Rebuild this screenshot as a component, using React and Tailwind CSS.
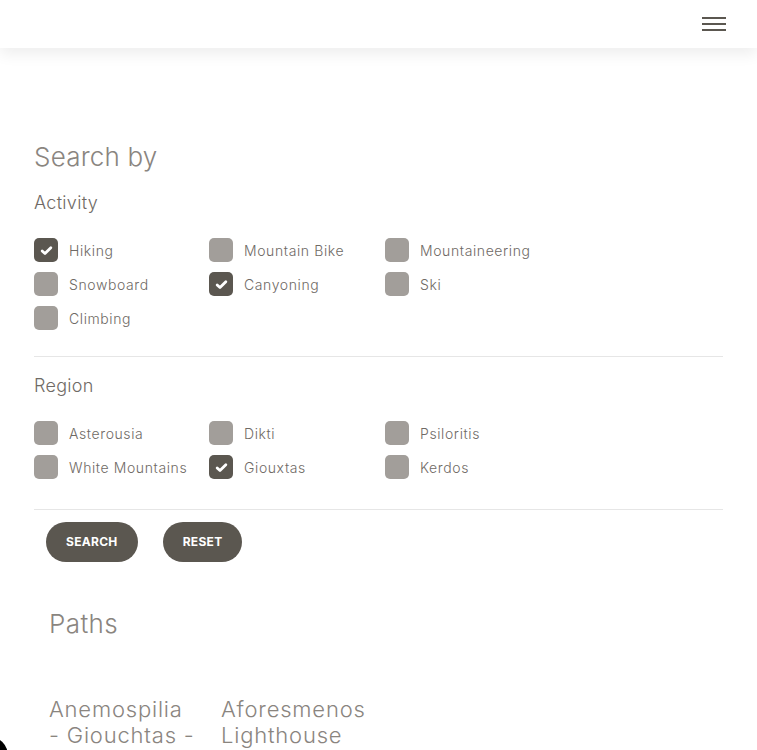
import React, { useState } from 'react';

const activities = [
  { name: 'Hiking', checked: true },
  { name: 'Mountain Bike', checked: false },
  { name: 'Mountaineering', checked: false },
  { name: 'Snowboard', checked: false },
  { name: 'Canyoning', checked: true },
  { name: 'Ski', checked: false },
  { name: 'Climbing', checked: false },
];

const regions = [
  { name: 'Asterousia', checked: false },
  { name: 'Dikti', checked: false },
  { name: 'Psiloritis', checked: false },
  { name: 'White Mountains', checked: false },
  { name: 'Giouxtas', checked: true },
  { name: 'Kerdos', checked: false },
];

const paths = ['Anemospilia - Giouchtas -', 'Aforesmenos Lighthouse'];

const CheckItem = ({ name, checked, onToggle }) => (
  <label className="flex items-center h-[34px] cursor-pointer" onClick={onToggle}>
    <span
      className={
        'w-6 h-6 rounded-[5px] flex items-center justify-center shrink-0 ' +
        (checked ? 'bg-[#5b5750]' : 'bg-[#a29e9a]')
      }
    >
      {checked && (
        <svg viewBox="0 0 12 12" className="w-[13px] h-[13px]">
          <path d="M2 6.4l2.6 2.4L10 3.4" fill="none" stroke="#fff" strokeWidth="2.6" strokeLinecap="round" strokeLinejoin="round" />
        </svg>
      )}
    </span>
    <span className="ml-[11px] text-[14px] font-light text-[#6f6a65] tracking-[0.6px]">{name}</span>
  </label>
);

const CheckGroup = ({ items }) => {
  const [state, setState] = useState(items);
  const toggle = (i) => setState((prev) => prev.map((it, j) => (j === i ? { ...it, checked: !it.checked } : it)));
  return (
    <div className="grid grid-cols-[175px_176px_175px]">
      {state.map((it, i) => (
        <CheckItem key={it.name} name={it.name} checked={it.checked} onToggle={() => toggle(i)} />
      ))}
    </div>
  );
};

export default function App() {
  return (
    <div className="min-h-[750px] bg-white font-['Inter',sans-serif] relative overflow-hidden">
      <header className="h-12 bg-white flex items-center justify-end pr-[31px] shadow-[0_6px_14px_rgba(0,0,0,0.07)] relative z-10">
        <button className="flex flex-col gap-[4px]">
          <span className="block w-6 h-[2px] bg-[#5b5750]"></span>
          <span className="block w-6 h-[2px] bg-[#5b5750]"></span>
          <span className="block w-6 h-[2px] bg-[#5b5750]"></span>
        </button>
      </header>

      <main className="px-[34px] pt-[92px]">
        <h1 className="text-[26px] font-light text-[#8a857f] leading-[34px] tracking-[0.2px]">Search by</h1>

        <h2 className="mt-[17px] text-[18px] font-light text-[#6f6a65] leading-[24px] tracking-[0.3px]">Activity</h2>
        <div className="mt-[18px]">
          <CheckGroup items={activities} />
        </div>

        <div className="mt-[21px] border-t border-[#e6e6e6]"></div>

        <h2 className="mt-[17px] text-[18px] font-light text-[#6f6a65] leading-[24px] tracking-[0.3px]">Region</h2>
        <div className="mt-[18px]">
          <CheckGroup items={regions} />
        </div>

        <div className="mt-[25px] border-t border-[#e6e6e6]"></div>

        <div className="flex gap-[25px] pl-3 mt-3">
          <button className="h-10 px-[20px] rounded-full bg-[#5b5750] text-white text-[12px] font-bold tracking-[0.3px]">SEARCH</button>
          <button className="h-10 px-[20px] rounded-full bg-[#5b5750] text-white text-[12px] font-bold tracking-[0.3px]">RESET</button>
        </div>

        <section className="pl-[15px] mt-[45px]">
          <h2 className="text-[26px] font-light text-[#8a857f] leading-[34px] tracking-[0.4px]">Paths</h2>
          <div className="flex mt-[55px]">
            {paths.map((p) => (
              <div key={p} className="w-[172px] pr-[26px] text-[22px] font-light text-[#8a857f] leading-[26px] tracking-[0.8px]">
                {p}
              </div>
            ))}
          </div>
        </section>
      </main>

      <div className="absolute left-[-32px] bottom-[-26px] w-[40px] h-[40px] rounded-full bg-black"></div>
    </div>
  );
}
